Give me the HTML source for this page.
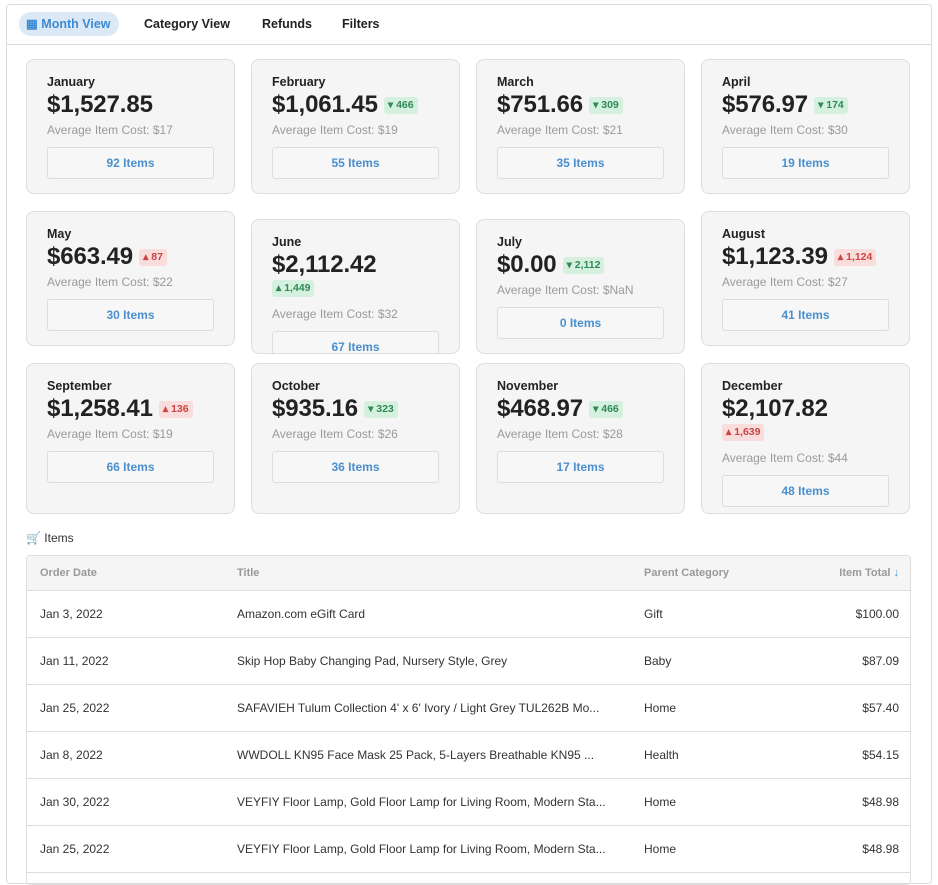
<!DOCTYPE html>
<html><head><meta charset="utf-8"><style>
*{box-sizing:border-box;margin:0;padding:0}
body{width:938px;height:872px;background:#fff;font-family:"Liberation Sans",sans-serif;position:relative;overflow:hidden;color:#222}
.outer{position:absolute;left:6px;top:4px;width:926px;height:880px;border:1px solid #dcdcdc;border-radius:4px}
.tabs{position:absolute;left:6px;top:4px;width:926px;height:41px;border-bottom:1px solid #dcdcdc}
.tab{position:absolute;top:8px;font-size:12.5px;font-weight:700;color:#222;line-height:24px}
.tab.act{left:13px;background:#dbe9f7;color:#3d8ad1;border-radius:12px;padding:0 7px;width:100px}
.card{position:absolute;width:209px;height:135px;background:#f5f5f5;border:1px solid #ddd;border-radius:8px;overflow:hidden}
.m{position:absolute;left:20px;top:15px;font-size:12.5px;font-weight:700;color:#222}
.a{position:absolute;left:20px;top:31px;font-size:24px;font-weight:700;color:#222;white-space:nowrap;display:flex;align-items:center;letter-spacing:-0.1px}
.b{display:inline-block;font-size:10.5px;font-weight:700;padding:0 4px;height:17px;line-height:17px;border-radius:3px;margin-left:6px;letter-spacing:0}
.g{background:#d6f0df;color:#2e8b57}.r{background:#f9dcdc;color:#cc4444}
.b2{position:absolute;left:20px;top:60px;margin:0}
.avg{position:absolute;left:20px;top:63px;font-size:12px;color:#9a9a9a}
.btn{position:absolute;left:20px;top:87px;width:167px;height:32px;border:1px solid #ddd;background:#f7f7f7;border-radius:3px;text-align:center;line-height:30px;font-size:12px;font-weight:700;color:#4a90cf}
.items{position:absolute;left:26px;top:531px;font-size:12px;color:#333}
.tbl{position:absolute;left:26px;top:555px;width:885px;height:330px;border:1px solid #ddd;border-radius:4px;overflow:hidden}
.row{position:absolute;left:0;width:885px;height:47px;border-bottom:1px solid #ddd;font-size:12px;color:#333}
.row span{position:absolute;top:0;line-height:46px;white-space:nowrap}
.hd{background:#f5f5f5;height:35px;top:0}
.hd span{line-height:34px;font-size:11px;font-weight:700;color:#999}
.c1{left:13px}.c2{left:210px}.c3{left:617px}.c4{right:13px}
</style></head><body>
<div class="outer"></div>
<div class="tabs">
<div class="tab act">▦ Month View</div>
<div class="tab" style="left:138px">Category View</div>
<div class="tab" style="left:256px">Refunds</div>
<div class="tab" style="left:336px">Filters</div>
</div>

<div class="card" style="left:26px;top:59px"><div class="m">January</div><div class="a">$1,527.85</div><div class="avg">Average Item Cost: $17</div><div class="btn">92 Items</div></div>
<div class="card" style="left:251px;top:59px"><div class="m">February</div><div class="a">$1,061.45<span class="b g">▾ 466</span></div><div class="avg">Average Item Cost: $19</div><div class="btn">55 Items</div></div>
<div class="card" style="left:476px;top:59px"><div class="m">March</div><div class="a">$751.66<span class="b g">▾ 309</span></div><div class="avg">Average Item Cost: $21</div><div class="btn">35 Items</div></div>
<div class="card" style="left:701px;top:59px"><div class="m">April</div><div class="a">$576.97<span class="b g">▾ 174</span></div><div class="avg">Average Item Cost: $30</div><div class="btn">19 Items</div></div>

<div class="card" style="left:26px;top:211px"><div class="m">May</div><div class="a">$663.49<span class="b r">▴ 87</span></div><div class="avg">Average Item Cost: $22</div><div class="btn">30 Items</div></div>
<div class="card" style="left:251px;top:219px"><div class="m">June</div><div class="a">$2,112.42</div><span class="b g b2">▴ 1,449</span><div class="avg" style="top:87px">Average Item Cost: $32</div><div class="btn" style="top:111px">67 Items</div></div>
<div class="card" style="left:476px;top:219px"><div class="m">July</div><div class="a">$0.00<span class="b g">▾ 2,112</span></div><div class="avg">Average Item Cost: $NaN</div><div class="btn">0 Items</div></div>
<div class="card" style="left:701px;top:211px"><div class="m">August</div><div class="a">$1,123.39<span class="b r">▴ 1,124</span></div><div class="avg">Average Item Cost: $27</div><div class="btn">41 Items</div></div>

<div class="card" style="left:26px;top:363px;height:151px"><div class="m">September</div><div class="a">$1,258.41<span class="b r">▴ 136</span></div><div class="avg">Average Item Cost: $19</div><div class="btn">66 Items</div></div>
<div class="card" style="left:251px;top:363px;height:151px"><div class="m">October</div><div class="a">$935.16<span class="b g">▾ 323</span></div><div class="avg">Average Item Cost: $26</div><div class="btn">36 Items</div></div>
<div class="card" style="left:476px;top:363px;height:151px"><div class="m">November</div><div class="a">$468.97<span class="b g">▾ 466</span></div><div class="avg">Average Item Cost: $28</div><div class="btn">17 Items</div></div>
<div class="card" style="left:701px;top:363px;height:151px"><div class="m">December</div><div class="a">$2,107.82</div><span class="b r b2">▴ 1,639</span><div class="avg" style="top:87px">Average Item Cost: $44</div><div class="btn" style="top:111px">48 Items</div></div>

<div class="items">🛒 Items</div>
<div class="tbl">
<div class="row hd"><span class="c1">Order Date</span><span class="c2">Title</span><span class="c3">Parent Category</span><span class="c4">Item Total <b style="color:#4a90cf">↓</b></span></div>
<div class="row" style="top:35px"><span class="c1">Jan 3, 2022</span><span class="c2">Amazon.com eGift Card</span><span class="c3">Gift</span><span class="c4">$100.00</span></div>
<div class="row" style="top:82px"><span class="c1">Jan 11, 2022</span><span class="c2">Skip Hop Baby Changing Pad, Nursery Style, Grey</span><span class="c3">Baby</span><span class="c4">$87.09</span></div>
<div class="row" style="top:129px"><span class="c1">Jan 25, 2022</span><span class="c2">SAFAVIEH Tulum Collection 4' x 6' Ivory / Light Grey TUL262B Mo...</span><span class="c3">Home</span><span class="c4">$57.40</span></div>
<div class="row" style="top:176px"><span class="c1">Jan 8, 2022</span><span class="c2">WWDOLL KN95 Face Mask 25 Pack, 5-Layers Breathable KN95 ...</span><span class="c3">Health</span><span class="c4">$54.15</span></div>
<div class="row" style="top:223px"><span class="c1">Jan 30, 2022</span><span class="c2">VEYFIY Floor Lamp, Gold Floor Lamp for Living Room, Modern Sta...</span><span class="c3">Home</span><span class="c4">$48.98</span></div>
<div class="row" style="top:270px"><span class="c1">Jan 25, 2022</span><span class="c2">VEYFIY Floor Lamp, Gold Floor Lamp for Living Room, Modern Sta...</span><span class="c3">Home</span><span class="c4">$48.98</span></div>
</div>
</body></html>
